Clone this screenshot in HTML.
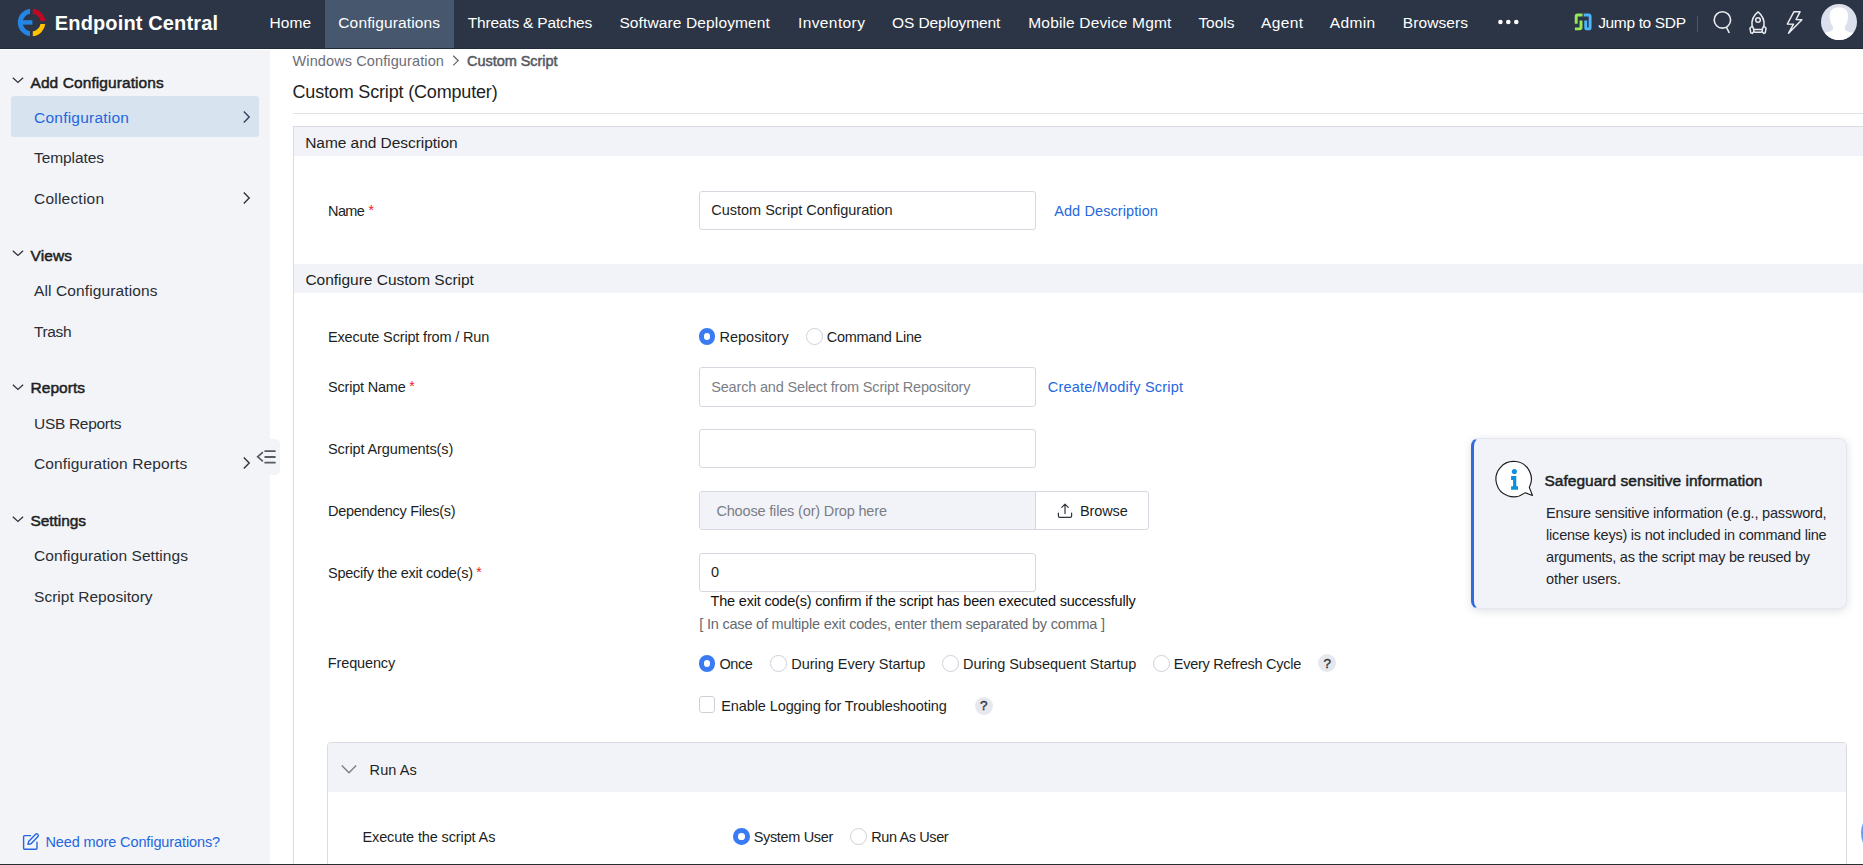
<!DOCTYPE html>
<html lang="en">
<head>
<meta charset="utf-8">
<title>Endpoint Central - Custom Script (Computer)</title>
<style>
  html, body { margin: 0; padding: 0; width: 1863px; height: 865px; overflow: hidden; }
  #root { position: absolute; left: 0; top: 0; width: 1863px; height: 865px; overflow: hidden; background: #ffffff; }
  body { width: 1863px; height: 865px; overflow: hidden; position: relative; background: #ffffff;
         font-family: "Liberation Sans", sans-serif; }
  .a { position: absolute; box-sizing: border-box; }
  .t { position: absolute; white-space: pre; font-family: "Liberation Sans", sans-serif; }
  svg { position: absolute; overflow: visible; }
  .inp { position: absolute; box-sizing: border-box; border: 1px solid #d6d8e0; border-radius: 3px; background: #fff; }
  .rad { position: absolute; box-sizing: border-box; width: 16.7px; height: 16.7px; border-radius: 50%; border: 1px solid #cfd1da; background: #fff; }
  .rad.on { border: 5.1px solid #3a7bf3; background: #fff; }
  .q { position: absolute; width: 18px; height: 18px; border-radius: 50%; background: #e7e8ee; }
</style>
</head>
<body>
<div id="root">

<!-- ================= TOP NAV ================= -->
<div class="a" id="nav" style="left:0;top:0;width:1863px;height:49px;background:#2c3545;border-bottom:1px solid #222b3a;"></div>
<div class="a" style="left:325px;top:0;width:129px;height:48px;background:#47576e;"></div>

<!-- logo -->
<svg style="left:17px;top:8px;" width="30" height="30" viewBox="0 0 30 30">
  <defs>
    <clipPath id="lgb"><rect x="0" y="0" width="13.05" height="30"/></clipPath>
    <clipPath id="lgr"><rect x="15.8" y="0" width="15" height="13.0"/></clipPath>
    <clipPath id="lgy"><rect x="15.8" y="15.9" width="15" height="15"/></clipPath>
  </defs>
  <g fill="none" stroke-width="4.8">
    <circle cx="14.6" cy="14.5" r="11.35" stroke="#2585e4" clip-path="url(#lgb)"/>
    <circle cx="14.6" cy="14.5" r="11.35" stroke="#bf0824" clip-path="url(#lgr)"/>
    <circle cx="14.6" cy="14.5" r="11.35" stroke="#ffc300" clip-path="url(#lgy)"/>
  </g>
  <rect x="3.4" y="12.2" width="12" height="4.45" fill="#2585e4"/>
</svg>

<!-- more dots -->
<svg style="left:1496px;top:16px;" width="26" height="12" viewBox="0 0 26 12">
  <circle cx="4.4" cy="6" r="2.3" fill="#fff"/><circle cx="12.3" cy="6" r="2.3" fill="#fff"/><circle cx="20.3" cy="6" r="2.3" fill="#fff"/>
</svg>

<!-- SDP icon -->
<svg style="left:1574px;top:13px;" width="18" height="18" viewBox="0 0 18 18">
  <g fill="none" stroke-width="2.9" stroke-linejoin="round">
    <path d="M2.2 10.8 V3.3 Q2.2 2.0 3.5 2.0 H8.5" stroke="#95e856"/>
    <path d="M7.0 7.4 V14.6 Q7.0 15.9 5.7 15.9 H0.9" stroke="#95e856"/>
    <path d="M9.6 2.0 H14.6 Q16.1 2.0 16.1 3.5 V14.4 Q16.1 15.9 14.6 15.9 H13.2 Q11.7 15.9 11.7 14.4 V7.4" stroke="#4db5fb"/>
  </g>
</svg>
<div class="a" style="left:1697px;top:16px;width:1px;height:16px;background:#4a566d;"></div>

<!-- search -->
<svg style="left:1710px;top:8px;" width="26" height="28" viewBox="0 0 26 28">
  <circle cx="12.4" cy="11.95" r="8.2" fill="none" stroke="#e9ebf0" stroke-width="1.6"/>
  <path d="M16.4 19.2 L19.3 25" stroke="#e9ebf0" stroke-width="1.6" fill="none" stroke-linecap="butt"/>
</svg>
<!-- rocket -->
<svg style="left:1747px;top:10px;" width="22" height="26" viewBox="0 0 22 26">
  <g fill="none" stroke="#e9ebf0" stroke-width="1.5" stroke-linejoin="round" stroke-linecap="round">
    <path d="M11 1.9 C 6.4 5.6 4.4 10.6 5.1 15.6 L 6.8 19.4 H 15.2 L 16.9 15.6 C 17.6 10.6 15.6 5.6 11 1.9 Z"/>
    <circle cx="11" cy="9.95" r="2.3"/>
    <path d="M6.8 19.4 V21 Q6.8 22.3 8.1 22.3 H13.9 Q15.2 22.3 15.2 21 V19.4"/>
    <path d="M5.0 16.2 L2.9 18.2 L3.8 22.9 L5.2 23.4 L6.9 21.8"/>
    <path d="M17.0 16.2 L19.1 18.2 L18.2 22.9 L16.8 23.4 L15.1 21.8"/>
  </g>
</svg>
<!-- lightning -->
<svg style="left:1785px;top:10px;" width="20" height="26" viewBox="0 0 20 26">
  <path d="M8.9 1.8 H15 L11.1 9.5 L16.9 9.7 L3.6 23.2 L8.5 14.2 L2.3 14 Z" fill="none" stroke="#e9ebf0" stroke-width="1.5" stroke-linejoin="round"/>
</svg>
<!-- avatar -->
<svg style="left:1821px;top:4px;" width="36" height="36" viewBox="0 0 36 36">
  <defs><clipPath id="av"><circle cx="18" cy="18" r="18"/></clipPath></defs>
  <circle cx="18" cy="18" r="18" fill="#dce0ec"/>
  <g clip-path="url(#av)" fill="#ffffff">
    <path d="M17.9 3.2 C 24.6 3.2 27.4 7.6 27 13 C 26.7 17.4 25.6 20.6 23.9 22.6 C 23.3 24.4 24.4 26.4 26 27.2 C 28 28 30.4 28.2 32.6 29 L 32.6 38 H 3 L 3 29 C 5.2 28.2 7.6 28 9.6 27.2 C 11.4 26.4 12.4 24.4 12 22.6 C 10.2 20.6 9 17.4 8.7 13 C 8.3 7.6 11.2 3.2 17.9 3.2 Z"/>
  </g>
</svg>

<!-- ================= SIDEBAR ================= -->
<div class="a" style="left:0;top:50px;width:270px;height:815px;background:#f2f4f8;"></div>
<div class="a" style="left:11px;top:96px;width:248px;height:41px;background:#d8e3f0;border-radius:3px;"></div>
<!-- collapse tab -->
<div class="a" style="left:270px;top:439px;width:10px;height:36px;background:#f2f4f8;border-radius:0 5px 5px 0;"></div>
<svg style="left:256px;top:449px;" width="21" height="16" viewBox="0 0 21 16">
  <g fill="none" stroke="#585a63" stroke-width="1.8">
    <path d="M6.9 3.2 L1.7 7.8 L6.9 12.4" stroke-width="1.7"/>
    <path d="M9.2 2.2 H18.9 M9.2 8 H18.9 M9.2 13.7 H18.9" stroke-linecap="round"/>
  </g>
</svg>
<!-- section chevrons (down) -->
<svg style="left:10.6px;top:75.35px;" width="14" height="10" viewBox="0 0 14 10"><path d="M1.8 2.65 L6.95 7.45 L12.1 2.65" fill="none" stroke="#30343b" stroke-width="1.3"/></svg>
<svg style="left:10.6px;top:248.2px;" width="14" height="10" viewBox="0 0 14 10"><path d="M1.8 2.65 L6.95 7.45 L12.1 2.65" fill="none" stroke="#30343b" stroke-width="1.3"/></svg>
<svg style="left:10.6px;top:381.5px;" width="14" height="10" viewBox="0 0 14 10"><path d="M1.8 2.65 L6.95 7.45 L12.1 2.65" fill="none" stroke="#30343b" stroke-width="1.3"/></svg>
<svg style="left:10.6px;top:514.45px;" width="14" height="10" viewBox="0 0 14 10"><path d="M1.8 2.65 L6.95 7.45 L12.1 2.65" fill="none" stroke="#30343b" stroke-width="1.3"/></svg>
<!-- item chevrons (right) -->
<svg style="left:242px;top:109.6px;" width="9" height="14" viewBox="0 0 9 14"><path d="M1.8 1.4 L7.2 6.9 L1.8 12.4" fill="none" stroke="#33415c" stroke-width="1.4"/></svg>
<svg style="left:242px;top:191px;" width="9" height="14" viewBox="0 0 9 14"><path d="M1.8 1.4 L7.2 6.9 L1.8 12.4" fill="none" stroke="#30343b" stroke-width="1.4"/></svg>
<svg style="left:242px;top:455.5px;" width="9" height="14" viewBox="0 0 9 14"><path d="M1.8 1.4 L7.2 6.9 L1.8 12.4" fill="none" stroke="#30343b" stroke-width="1.4"/></svg>
<!-- need more icon -->
<svg style="left:22px;top:832px;" width="18" height="18" viewBox="0 0 18 18">
  <g fill="none" stroke="#2467de" stroke-width="1.4" stroke-linejoin="round">
    <path d="M9 3.6 H2.6 Q1.6 3.6 1.6 4.6 V16.2 Q1.6 17.2 2.6 17.2 H14 Q15 17.2 15 16.2 V9.8"/>
    <path d="M6.6 9.6 L13.6 2.2 Q14.6 1.4 15.6 2.2 L16 2.6 Q16.8 3.6 16 4.6 L9 11.8 L6 12.4 Z"/>
  </g>
</svg>

<!-- ================= MAIN ================= -->
<!-- breadcrumb arrow -->
<svg style="left:452px;top:55px;" width="8" height="13" viewBox="0 0 8 13"><path d="M1.2 0.8 L6.2 5.6 L1.2 10.4" fill="none" stroke="#5d6068" stroke-width="1.2"/></svg>
<!-- title rule -->
<div class="a" style="left:293px;top:113px;width:1570px;height:1px;background:#e1e2e8;"></div>
<!-- outer card -->
<div class="a" style="left:293px;top:126px;width:1580px;height:760px;border:1px solid #dadbe3;background:#fff;"></div>
<div class="a" style="left:294px;top:127px;width:1569px;height:29px;background:#f2f3f8;"></div>
<div class="a" style="left:294px;top:264px;width:1569px;height:29px;background:#f2f3f8;"></div>

<!-- inputs -->
<div class="inp" style="left:699px;top:191px;width:337px;height:39px;"></div>
<div class="inp" style="left:699px;top:367px;width:337px;height:40px;"></div>
<div class="inp" style="left:699px;top:429px;width:337px;height:39px;"></div>
<div class="inp" style="left:699px;top:491px;width:450px;height:39px;"></div>
<div class="a" style="left:700px;top:492px;width:335px;height:37px;background:#f2f3f8;border-radius:2px 0 0 2px;"></div>
<div class="a" style="left:1035px;top:492px;width:1px;height:37px;background:#d6d8e0;"></div>
<div class="inp" style="left:699px;top:553px;width:337px;height:39px;"></div>
<!-- upload icon -->
<svg style="left:1057px;top:503px;" width="16" height="16" viewBox="0 0 16 16">
  <g fill="none" stroke="#30343b" stroke-width="1.2" stroke-linecap="round" stroke-linejoin="round">
    <path d="M8 1.4 V10.6 M4.8 4.4 L8 1.2 L11.2 4.4"/>
    <path d="M1.4 10 V13 Q1.4 14.4 2.8 14.4 H13.2 Q14.6 14.4 14.6 13 V10"/>
  </g>
</svg>

<!-- radios -->
<div class="rad on" style="left:698.8px;top:328.1px;"></div>
<div class="rad" style="left:806.1px;top:328.1px;"></div>
<div class="rad on" style="left:698.8px;top:655px;"></div>
<div class="rad" style="left:770.2px;top:655px;"></div>
<div class="rad" style="left:942.1px;top:655px;"></div>
<div class="rad" style="left:1152.9px;top:655px;"></div>
<div class="q" style="left:1318px;top:654px;"></div>
<!-- checkbox -->
<div class="a" style="left:699px;top:696px;width:16px;height:17px;border:1px solid #cfd1da;border-radius:3px;background:#fff;"></div>
<div class="q" style="left:975px;top:697px;"></div>

<!-- Run As panel -->
<div class="a" style="left:327px;top:742px;width:1520px;height:140px;border:1px solid #dadbe3;border-radius:4px;background:#fff;"></div>
<div class="a" style="left:328px;top:743px;width:1518px;height:49px;background:#f2f3f8;border-radius:3px 3px 0 0;"></div>
<svg style="left:340px;top:763px;" width="18" height="12" viewBox="0 0 18 12"><path d="M1.8 2.6 L9 9.8 L16.2 2.6" fill="none" stroke="#7b7e85" stroke-width="1.4"/></svg>
<div class="rad on" style="left:733px;top:828.1px;"></div>
<div class="rad" style="left:850px;top:828.1px;"></div>

<!-- right-edge floating button sliver -->
<div class="a" style="left:1861px;top:807px;width:52px;height:52px;border-radius:50%;background:#6a9df6;"></div>

<!-- info card -->
<div class="a" style="left:1471px;top:438px;width:376px;height:171px;border-radius:8px;background:#f2f3f8;border:1px solid #e6e7ee;border-left:3px solid #2f6ae0;box-shadow:0 2px 9px rgba(60,70,100,0.17);"></div>
<svg style="left:1494px;top:460px;" width="42" height="42" viewBox="0 0 42 42">
  <path d="M35.3 27.4 L38.5 35.5 Q34.4 34.2 32.8 33.2 Q31.2 32.4 30.1 33.4 A17.7 17.7 0 1 1 35.3 27.4 Z" fill="#fff" stroke="#1b1c20" stroke-width="1.15" stroke-linejoin="round"/>
  <circle cx="20.4" cy="11.5" r="2.55" fill="#0b90dc"/>
  <path d="M17.1 16.1 H22.3 V26.2 H24 V29.7 H17.1 V26.2 H19.1 V19.9 H17.1 Z" fill="#0b90dc"/>
</svg>

<!-- bottom dark line -->
<div class="a" style="left:0;top:864px;width:1863px;height:1px;background:#2a2c31;"></div>

<span class="t" style="left:54.8px;top:11px;font-size:20px;line-height:24px;font-weight:700;color:#fff;letter-spacing:0.139px;">Endpoint Central</span>
<span class="t" style="left:269.6px;top:13px;font-size:15.5px;line-height:19px;color:#ffffff;letter-spacing:0.047px;">Home</span>
<span class="t" style="left:338.3px;top:13px;font-size:15.5px;line-height:19px;color:#ffffff;letter-spacing:0.134px;">Configurations</span>
<span class="t" style="left:467.7px;top:13px;font-size:15.5px;line-height:19px;color:#ffffff;letter-spacing:-0.182px;">Threats &amp; Patches</span>
<span class="t" style="left:619.4px;top:13px;font-size:15.5px;line-height:19px;color:#ffffff;letter-spacing:0.128px;">Software Deployment</span>
<span class="t" style="left:798.0px;top:13px;font-size:15.5px;line-height:19px;color:#ffffff;letter-spacing:0.392px;">Inventory</span>
<span class="t" style="left:892.0px;top:13px;font-size:15.5px;line-height:19px;color:#ffffff;letter-spacing:-0.085px;">OS Deployment</span>
<span class="t" style="left:1028.3px;top:13px;font-size:15.5px;line-height:19px;color:#ffffff;letter-spacing:0.153px;">Mobile Device Mgmt</span>
<span class="t" style="left:1198.4px;top:13px;font-size:15.5px;line-height:19px;color:#ffffff;letter-spacing:-0.047px;">Tools</span>
<span class="t" style="left:1260.9px;top:13px;font-size:15.5px;line-height:19px;color:#ffffff;letter-spacing:0.396px;">Agent</span>
<span class="t" style="left:1329.7px;top:13px;font-size:15.5px;line-height:19px;color:#ffffff;letter-spacing:0.366px;">Admin</span>
<span class="t" style="left:1402.8px;top:13px;font-size:15.5px;line-height:19px;color:#ffffff;letter-spacing:0.084px;">Browsers</span>
<span class="t" style="left:1598.2px;top:13px;font-size:15.5px;line-height:19px;color:#ffffff;letter-spacing:-0.351px;">Jump to SDP</span>
<span class="t" style="left:30.5px;top:73px;font-size:15.5px;line-height:19px;color:#1d1f24;letter-spacing:0.080px;-webkit-text-stroke:0.5px currentColor;">Add Configurations</span>
<span class="t" style="left:34.0px;top:108px;font-size:15.5px;line-height:19px;color:#2467de;letter-spacing:0.233px;">Configuration</span>
<span class="t" style="left:34.0px;top:148px;font-size:15.5px;line-height:19px;color:#2a2d33;letter-spacing:-0.082px;">Templates</span>
<span class="t" style="left:34.0px;top:189px;font-size:15.5px;line-height:19px;color:#2a2d33;letter-spacing:0.215px;">Collection</span>
<span class="t" style="left:30.5px;top:246px;font-size:15.5px;line-height:19px;color:#1d1f24;letter-spacing:0.130px;-webkit-text-stroke:0.5px currentColor;">Views</span>
<span class="t" style="left:34.0px;top:281px;font-size:15.5px;line-height:19px;color:#2a2d33;letter-spacing:0.119px;">All Configurations</span>
<span class="t" style="left:34.0px;top:322px;font-size:15.5px;line-height:19px;color:#2a2d33;letter-spacing:-0.387px;">Trash</span>
<span class="t" style="left:30.5px;top:378px;font-size:15.5px;line-height:19px;color:#1d1f24;letter-spacing:0.036px;-webkit-text-stroke:0.5px currentColor;">Reports</span>
<span class="t" style="left:34.0px;top:414px;font-size:15.5px;line-height:19px;color:#2a2d33;letter-spacing:-0.305px;">USB Reports</span>
<span class="t" style="left:34.0px;top:454px;font-size:15.5px;line-height:19px;color:#2a2d33;letter-spacing:0.126px;">Configuration Reports</span>
<span class="t" style="left:30.5px;top:511px;font-size:15.5px;line-height:19px;color:#1d1f24;letter-spacing:-0.074px;-webkit-text-stroke:0.5px currentColor;">Settings</span>
<span class="t" style="left:34.0px;top:546px;font-size:15.5px;line-height:19px;color:#2a2d33;letter-spacing:0.071px;">Configuration Settings</span>
<span class="t" style="left:34.0px;top:587px;font-size:15.5px;line-height:19px;color:#2a2d33;letter-spacing:0.037px;">Script Repository</span>
<span class="t" style="left:45.5px;top:834px;font-size:14.5px;line-height:17px;color:#2467de;letter-spacing:-0.114px;">Need more Configurations?</span>
<span class="t" style="left:292.5px;top:53px;font-size:14.5px;line-height:17px;color:#6b6e75;letter-spacing:0.115px;">Windows Configuration</span>
<span class="t" style="left:467.0px;top:53px;font-size:14.5px;line-height:17px;color:#55585f;letter-spacing:-0.039px;-webkit-text-stroke:0.5px currentColor;">Custom Script</span>
<span class="t" style="left:292.5px;top:81px;font-size:18px;line-height:22px;color:#1d1f24;letter-spacing:-0.168px;">Custom Script (Computer)</span>
<span class="t" style="left:305.2px;top:133px;font-size:15.5px;line-height:19px;color:#1d1f24;letter-spacing:-0.045px;">Name and Description</span>
<span class="t" style="left:328.0px;top:203px;font-size:14.5px;line-height:17px;color:#1d1f24;letter-spacing:-0.596px;">Name</span>
<span class="t" style="left:368.6px;top:202px;font-size:14px;line-height:17px;color:#ee1c25;letter-spacing:0.000px;">*</span>
<span class="t" style="left:711.2px;top:202px;font-size:14.5px;line-height:17px;color:#1d1f24;letter-spacing:0.003px;">Custom Script Configuration</span>
<span class="t" style="left:1054.2px;top:203px;font-size:14.5px;line-height:17px;color:#2467de;letter-spacing:0.096px;">Add Description</span>
<span class="t" style="left:305.4px;top:270px;font-size:15.5px;line-height:19px;color:#1d1f24;letter-spacing:-0.016px;">Configure Custom Script</span>
<span class="t" style="left:328.0px;top:329px;font-size:14.5px;line-height:17px;color:#1d1f24;letter-spacing:-0.163px;">Execute Script from / Run</span>
<span class="t" style="left:719.6px;top:329px;font-size:14.5px;line-height:17px;color:#1d1f24;letter-spacing:-0.024px;">Repository</span>
<span class="t" style="left:826.8px;top:329px;font-size:14.5px;line-height:17px;color:#1d1f24;letter-spacing:-0.312px;">Command Line</span>
<span class="t" style="left:328.0px;top:379px;font-size:14.5px;line-height:17px;color:#1d1f24;letter-spacing:-0.208px;">Script Name</span>
<span class="t" style="left:409.2px;top:378px;font-size:14px;line-height:17px;color:#ee1c25;letter-spacing:0.000px;">*</span>
<span class="t" style="left:711.2px;top:379px;font-size:14.5px;line-height:17px;color:#7b7e85;letter-spacing:-0.171px;">Search and Select from Script Repository</span>
<span class="t" style="left:1047.8px;top:379px;font-size:14.5px;line-height:17px;color:#2467de;letter-spacing:0.202px;">Create/Modify Script</span>
<span class="t" style="left:328.0px;top:441px;font-size:14.5px;line-height:17px;color:#1d1f24;letter-spacing:-0.113px;">Script Arguments(s)</span>
<span class="t" style="left:328.0px;top:503px;font-size:14.5px;line-height:17px;color:#1d1f24;letter-spacing:-0.299px;">Dependency Files(s)</span>
<span class="t" style="left:716.4px;top:503px;font-size:14.5px;line-height:17px;color:#7b7e85;letter-spacing:-0.165px;">Choose files (or) Drop here</span>
<span class="t" style="left:1080.0px;top:503px;font-size:14.5px;line-height:17px;color:#1d1f24;letter-spacing:-0.132px;">Browse</span>
<span class="t" style="left:328.0px;top:565px;font-size:14.5px;line-height:17px;color:#1d1f24;letter-spacing:-0.249px;">Specify the exit code(s)</span>
<span class="t" style="left:476.3px;top:564px;font-size:14px;line-height:17px;color:#ee1c25;letter-spacing:0.000px;">*</span>
<span class="t" style="left:711.0px;top:564px;font-size:14.5px;line-height:17px;color:#1d1f24;letter-spacing:0.222px;">0</span>
<span class="t" style="left:710.6px;top:593px;font-size:14.5px;line-height:17px;color:#111;letter-spacing:-0.196px;">The exit code(s) confirm if the script has been executed successfully</span>
<span class="t" style="left:699.3px;top:616px;font-size:14.5px;line-height:17px;color:#666a70;letter-spacing:-0.208px;">[ In case of multiple exit codes, enter them separated by comma ]</span>
<span class="t" style="left:327.8px;top:655px;font-size:14.5px;line-height:17px;color:#1d1f24;letter-spacing:-0.139px;">Frequency</span>
<span class="t" style="left:719.5px;top:656px;font-size:14.5px;line-height:17px;color:#1d1f24;letter-spacing:-0.424px;">Once</span>
<span class="t" style="left:791.2px;top:656px;font-size:14.5px;line-height:17px;color:#1d1f24;letter-spacing:-0.021px;">During Every Startup</span>
<span class="t" style="left:963.0px;top:656px;font-size:14.5px;line-height:17px;color:#1d1f24;letter-spacing:-0.072px;">During Subsequent Startup</span>
<span class="t" style="left:1173.8px;top:656px;font-size:14.5px;line-height:17px;color:#1d1f24;letter-spacing:-0.264px;">Every Refresh Cycle</span>
<span class="t" style="left:1323.4px;top:656px;font-size:13.5px;line-height:16px;color:#2e3136;letter-spacing:0.000px;-webkit-text-stroke:0.35px currentColor;">?</span>
<span class="t" style="left:721.3px;top:698px;font-size:14.5px;line-height:17px;color:#1d1f24;letter-spacing:-0.105px;">Enable Logging for Troubleshooting</span>
<span class="t" style="left:979.9px;top:698px;font-size:13.5px;line-height:16px;color:#2e3136;letter-spacing:0.000px;-webkit-text-stroke:0.35px currentColor;">?</span>
<span class="t" style="left:369.6px;top:762px;font-size:14.5px;line-height:17px;color:#1d1f24;letter-spacing:0.090px;">Run As</span>
<span class="t" style="left:362.5px;top:829px;font-size:14.5px;line-height:17px;color:#1d1f24;letter-spacing:-0.125px;">Execute the script As</span>
<span class="t" style="left:753.7px;top:829px;font-size:14.5px;line-height:17px;color:#1d1f24;letter-spacing:-0.340px;">System User</span>
<span class="t" style="left:871.3px;top:829px;font-size:14.5px;line-height:17px;color:#1d1f24;letter-spacing:-0.401px;">Run As User</span>
<span class="t" style="left:1544.4px;top:471px;font-size:15.5px;line-height:19px;color:#1d1f24;letter-spacing:0.032px;-webkit-text-stroke:0.5px currentColor;">Safeguard sensitive information</span>
<span class="t" style="left:1546.1px;top:505px;font-size:14.5px;line-height:17px;color:#22252b;letter-spacing:-0.201px;">Ensure sensitive information (e.g., password,</span>
<span class="t" style="left:1546.1px;top:527px;font-size:14.5px;line-height:17px;color:#22252b;letter-spacing:-0.219px;">license keys) is not included in command line</span>
<span class="t" style="left:1546.1px;top:549px;font-size:14.5px;line-height:17px;color:#22252b;letter-spacing:-0.253px;">arguments, as the script may be reused by</span>
<span class="t" style="left:1546.1px;top:571px;font-size:14.5px;line-height:17px;color:#22252b;letter-spacing:-0.153px;">other users.</span>

</div>
</body>
</html>
